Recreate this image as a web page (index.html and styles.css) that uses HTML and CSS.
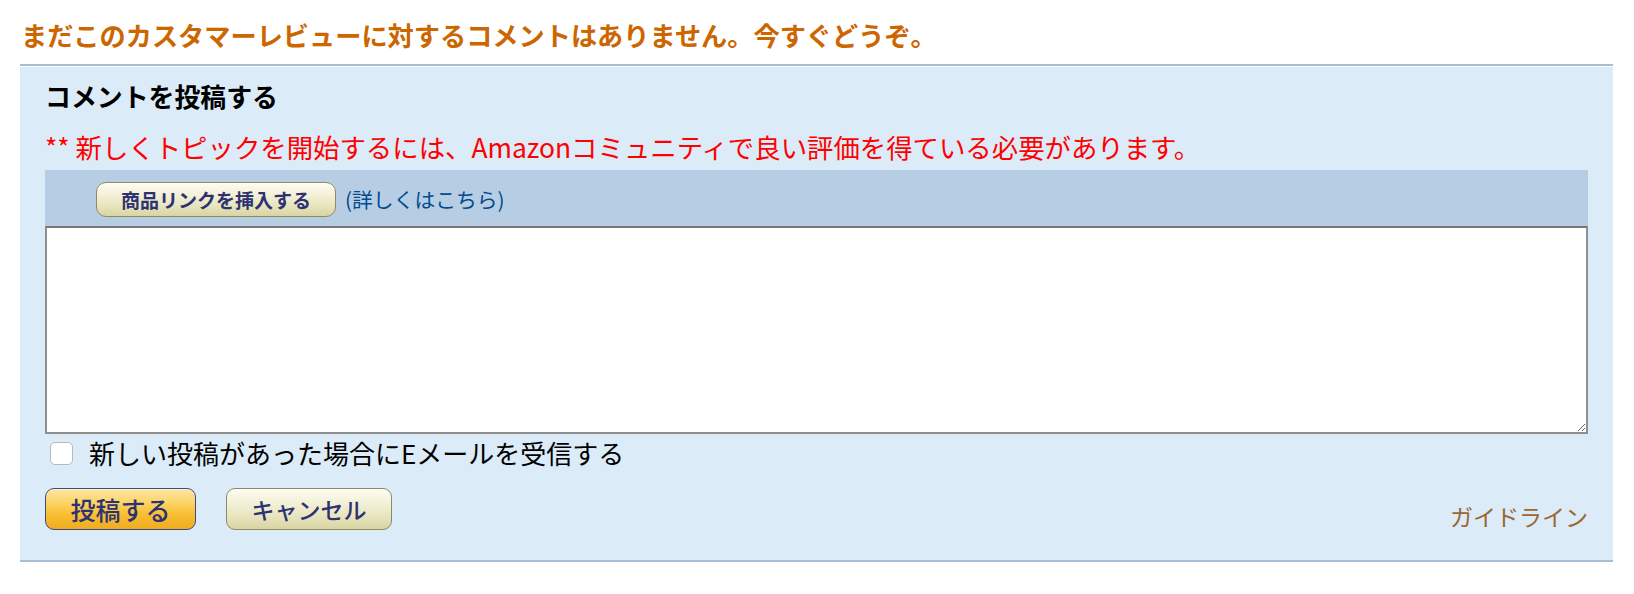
FILE: index.html
```html
<!DOCTYPE html>
<html lang="ja">
<head>
<meta charset="utf-8">
<title>コメントを投稿する</title>
<link rel="stylesheet" href="styles.css">
</head>
<body>
<div class="page">
  <h1 class="notice">まだこのカスタマーレビューに対するコメントはありません。今すぐどうぞ。</h1>
  <div class="panel-frame">
    <div class="panel">
      <h2 class="panel-title">コメントを投稿する</h2>
      <p class="warning">** 新しくトピックを開始するには、Amazonコミュニティで良い評価を得ている必要があります。</p>
      <div class="toolbar">
        <button class="btn btn-beige btn-insert" type="button">商品リンクを挿入する</button>
        <a class="help-link" href="#">(詳しくはこちら)</a>
      </div>
      <textarea class="comment-box"></textarea>
      <label class="subscribe">
        <input class="check" type="checkbox">
        <span>新しい投稿があった場合にEメールを受信する</span>
      </label>
      <div class="actions">
        <button class="btn btn-gold btn-post" type="button">投稿する</button>
        <button class="btn btn-beige btn-cancel" type="button">キャンセル</button>
        <a class="guideline" href="#">ガイドライン</a>
      </div>
    </div>
  </div>
</div>
</body>
</html>
```
FILE: styles.css
```css
html, body {
  margin: 0;
  padding: 0;
  background: #ffffff;
}

body {
  font-family: "Noto Sans CJK JP", "Liberation Sans", sans-serif;
  color: #000;
}

.page {
  padding: 17px 0 0 20px;
  width: 1593px;
}

.notice {
  margin: 0 0 11px 1px;
  font-size: 26.2px;
  line-height: 36px;
  font-weight: 700;
  color: #cc6600;
}

.panel-frame {
  border-top: 2px solid #a5bed5;
  border-bottom: 2px solid #a5bed5;
  padding-top: 1px;
  background: #ffffff;
}

.panel {
  background: #dbebf7;
  padding: 11px 25px 28px 25px;
}

.panel-title {
  margin: 0;
  font-size: 25.9px;
  line-height: 36px;
  font-weight: 700;
  color: #000;
}

.warning {
  margin: 15px 0 0 0;
  font-size: 26.4px;
  line-height: 36px;
  color: #ff0000;
}

.toolbar {
  margin-top: 5px;
  height: 56px;
  box-sizing: border-box;
  padding: 12px 0 0 51px;
  background: #b7cde3;
  display: flex;
  align-items: flex-start;
  gap: 9px;
}

.btn {
  font-family: "Noto Sans CJK JP", "Liberation Sans", sans-serif;
  color: #2e3272;
  padding: 0;
  margin: 0;
  cursor: pointer;
  box-sizing: border-box;
}

.btn-beige {
  border: 1px solid #8f8b60;
  background: linear-gradient(to bottom, #fdfcf2 0%, #f3f1d8 35%, #e7e4bd 70%, #d8d4a2 100%);
  box-shadow: inset 0 1px 0 #ffffff;
}

.btn-gold {
  border: 1px solid #3b4a85;
  background: linear-gradient(to bottom, #fde6a2 0%, #fcd66f 30%, #f8bf35 62%, #f0ac1f 100%);
  box-shadow: inset 0 1px 0 #fff2c8;
}

.btn-insert {
  width: 240px;
  height: 35px;
  border-radius: 10px;
  font-size: 19px;
  font-weight: 700;
  line-height: 33px;
}

.help-link {
  font-size: 20.8px;
  line-height: 35px;
  color: #004b91;
  text-decoration: none;
}

.comment-box {
  display: block;
  width: 100%;
  height: 208px;
  box-sizing: border-box;
  margin: 0;
  border: 2px solid #8f8f8f;
  border-top-color: #777777;
  background: #ffffff;
  resize: both;
  font-family: "Noto Sans CJK JP", "Liberation Sans", sans-serif;
  font-size: 20px;
}

.subscribe {
  display: flex;
  align-items: center;
  height: 30px;
  margin-top: 4px;
  font-size: 26px;
  line-height: 30px;
}

.check {
  appearance: none;
  -webkit-appearance: none;
  width: 23px;
  height: 23px;
  margin: 0 16px 0 5px;
  border: 1px solid #b9b9b9;
  border-radius: 5px;
  background: #ffffff;
  box-sizing: border-box;
}

.actions {
  margin-top: 20px;
  display: flex;
  align-items: flex-start;
  gap: 30px;
}

.btn-post {
  width: 151px;
  height: 42px;
  border-radius: 9px;
  font-size: 25px;
  font-weight: 500;
  line-height: 40px;
}

.btn-cancel {
  width: 166px;
  height: 42px;
  border-radius: 9px;
  font-size: 23px;
  font-weight: 500;
  line-height: 40px;
}

.guideline {
  margin-left: auto;
  margin-top: 12px;
  font-size: 23px;
  line-height: 32px;
  color: #9a6632;
  text-decoration: none;
}
```
